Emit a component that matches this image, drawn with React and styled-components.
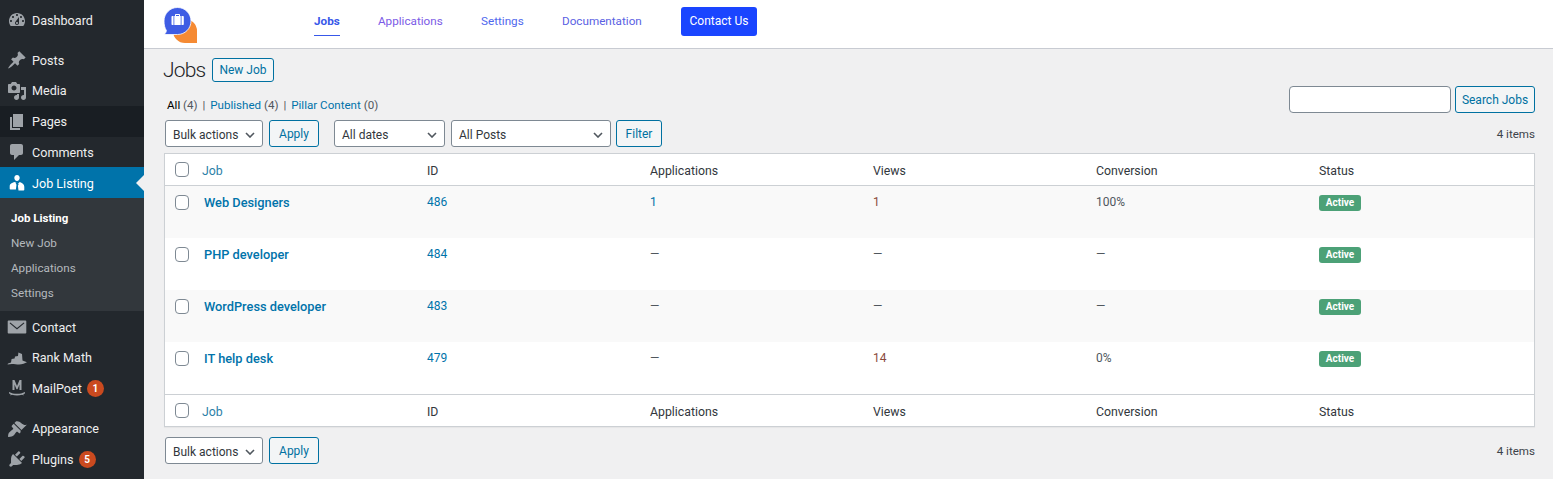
import styled, { createGlobalStyle } from "styled-components";

const FONT = `Roboto, "Noto Sans", "Liberation Sans", sans-serif`;

const GlobalStyle = createGlobalStyle`
  html, body {
    margin: 0;
    height: 100%;
    overflow: hidden;
    background: #f0f0f1;
  }
  body {
    font-family: ${FONT};
    font-size: 12px;
    color: #3c434a;
  }
  * {
    box-sizing: border-box;
  }
`;

const ICONS = {
  dashboard:
    "M3.76 16h12.48c1.1-1.37 1.76-3.11 1.76-5 0-4.42-3.58-8-8-8s-8 3.58-8 8c0 1.89.66 3.63 1.76 5zM10 4c.55 0 1 .45 1 1s-.45 1-1 1-1-.45-1-1 .45-1 1-1zM6 6c.55 0 1 .45 1 1s-.45 1-1 1-1-.45-1-1 .45-1 1-1zm8 0c.55 0 1 .45 1 1s-.45 1-1 1-1-.45-1-1 .45-1 1-1zm-5.37 5.55L12 7v6c0 1.1-.9 2-2 2s-2-.9-2-2c0-.57.24-1.08.63-1.45zM4 10c.55 0 1 .45 1 1s-.45 1-1 1-1-.45-1-1 .45-1 1-1zm12 0c.55 0 1 .45 1 1s-.45 1-1 1-1-.45-1-1 .45-1 1-1zm-5 3c0-.55-.45-1-1-1s-1 .45-1 1 .45 1 1 1 1-.45 1-1z",
  posts:
    "M10.44 3.02l1.82-1.82 6.36 6.35-1.83 1.82c-1.05-.68-2.48-.57-3.41.36l-.75.75c-.92.93-1.04 2.35-.35 3.41l-1.83 1.82-2.41-2.41-2.8 2.79c-.42.42-3.38 2.71-3.8 2.29s1.86-3.39 2.28-3.81l2.79-2.79L4.1 9.36l1.83-1.82c1.05.69 2.48.57 3.41-.36l.75-.75c.93-.92 1.04-2.35.35-3.41z",
  media:
    "M13 11V4c0-.55-.45-1-1-1h-1.67L9 1H5L3.67 3H2c-.55 0-1 .45-1 1v7c0 .55.45 1 1 1h10c.55 0 1-.45 1-1zM7 4.5c1.38 0 2.5 1.12 2.5 2.5S8.38 9.5 7 9.5 4.5 8.38 4.5 7 5.62 4.5 7 4.5zM14 6h5v10.5c0 1.38-1.12 2.5-2.5 2.5S14 17.88 14 16.5s1.12-2.5 2.5-2.5c.17 0 .34.02.5.05V9h-3V6zm-4 8.05V13h2v3.5c0 1.38-1.12 2.5-2.5 2.5S7 17.88 7 16.5 8.12 14 9.5 14c.17 0 .34.02.5.05z",
  pages: "M6 15V2h10v13H6zm-1 1h8v2H3V5h2v11z",
  comments:
    "M5 2h9c1.1 0 2 .9 2 2v7c0 1.1-.9 2-2 2h-2l-5 5v-5H5c-1.1 0-2-.9-2-2V4c0-1.1.9-2 2-2z",
  job: "M10 2c1.500 0 2.700 1.200 2.700 2.800S11.500 8 10 8 7.300 6.400 7.300 4.800 8.500 2 10 2zM7.300 9l2 .7-.6 1.100.8.700-.6 5H3.500c-.5 0-.8-.3-.8-.8v-2.900C2.700 11.100 5 9.800 7.300 9zm5.400 0c2.300.8 4.600 2.100 4.600 4.800v2.900c0 .5-.3.8-.8.8h-5l-.6-5 .8-.7-.6-1.100z",
  contact:
    "M1.500 3.500h17c.4 0 .8.3.8.8v11.400c0 .5-.4.8-.8.8h-17c-.4 0-.8-.3-.8-.8V4.300c0-.5.4-.8.8-.8zM3.300 5.500L2.600 6.300 10 12.500l7.400-6.200-.7-.8L10 11z",
  rankmath:
    "M1 15.500l3-1 .6-3.500 3-.5.4-2 3-.6.4-3.400 3.600 1.500.5 6.500 4.500 1.800-3.500 1.500c-2.800 1-5.400.8-8 .4-2.600-.4-5.200-.5-8 .3z",
  appearance:
    "M14.48 11.06L7.41 3.99l1.5-1.5c.5-.56 2.3-.47 3.51.32 1.21.8 1.43 1.28 2.91 2.1 1.18.64 2.45 1.26 4.45.85zm-.71.71L6.7 4.7 4.93 6.47c-.39.39-.39 1.02 0 1.41l1.06 1.06c.39.39.39 1.03 0 1.42-.6.6-1.43 1.11-2.21 1.69-.35.26-.7.53-1.01.84C1.43 13.71.96 15.88 1.13 17.9c2.4.1 4.400-.4 5.700-1.700.31-.31.58-.66.84-1.01.58-.78 1.09-1.61 1.69-2.21.39-.39 1.03-.39 1.42 0l1.06 1.06c.39.39 1.02.39 1.41 0z",
  plugins:
    "M13.11 4.36L9.87 7.6 8 5.73l3.24-3.24c.35-.34 1.05-.2 1.56.32.52.51.66 1.21.31 1.55zm-8 1.77l.91-1.12 9.01 9.01-1.19.84c-.71.71-2.63 1.16-3.82 1.16H6.14L4.9 17.26c-.59.59-1.54.59-2.12 0-.59-.58-.59-1.53 0-2.12l1.24-1.24v-3.88c0-1.13.4-3.19 1.09-3.89zm7.26 3.97l3.24-3.24c.34-.35 1.04-.21 1.55.31.52.51.66 1.21.31 1.55l-3.24 3.25z",
};

function MenuIcon({ name, active }) {
  return (
    <IconSvg viewBox="0 0 20 20" $active={active}>
      <path d={ICONS[name]} fillRule="evenodd" />
    </IconSvg>
  );
}

function MailPoetIcon() {
  return (
    <IconSvg viewBox="0 0 20 20">
      <path d="M5.500 2h2l2.500 6 2.500-6h2v10h-2V6.500l-2 4.800h-1l-2-4.800V12h-2z" />
      <path d="M2 14c2.600 1.300 5.200 1.800 8 1.800s5.400-.5 8-1.800v1.400l-1.500.7v1.500l-1.300-.8c-3.400 1-7 1-10.400 0l-1.300.8v-1.500L2 15.400z" />
    </IconSvg>
  );
}

function Logo() {
  return (
    <LogoSvg viewBox="0 0 34 38">
      <path d="M22 12a12 12 0 0 1 12 12c0 5 0 8 .5 12H22a12 12 0 0 1 0-24z" fill="#f58a33" />
      <path
        d="M14.500 .5C22 .5 28 6.500 28 14s-6 13.500-13.500 13.500H1c1.300-.8 2.200-2.300 2.400-4C1.800 21.300 1 17.700 1 14 1 6.500 7 .5 14.500 .5z"
        fill="#3e5ce4"
        stroke="#fff"
        strokeWidth="0.8"
      />
      <path
        d="M12 9V7.800c0-.5.4-.8.8-.8h3.400c.4 0 .8.3.8.8V9h3c.5 0 .8.4.8.8v7.400c0 .5-.3.8-.8.8H9.300c-.5 0-.8-.3-.8-.8V9.800c0-.4.3-.8.8-.8zm1 0h3V8h-3zM10.500 9v9h.8V9zm7.200 0v9h.8V9z"
        fill="#fff"
        fillRule="evenodd"
      />
    </LogoSvg>
  );
}

const MENU_TOP = [
  { label: "Dashboard", icon: "dashboard", gap: 10, height: 30 },
  { label: "Posts", icon: "posts", height: 30 },
  { label: "Media", icon: "media", height: 31 },
  { label: "Pages", icon: "pages", height: 31, dark: true },
  { label: "Comments", icon: "comments", height: 30 },
];

const SUBMENU = ["Job Listing", "New Job", "Applications", "Settings"];

const JOBS = [
  { title: "Web Designers", id: 486, apps: "1", views: "1", conv: "100%" },
  { title: "PHP developer", id: 484, apps: "—", views: "—", conv: "—" },
  { title: "WordPress developer", id: 483, apps: "—", views: "—", conv: "—" },
  { title: "IT help desk", id: 479, apps: "—", views: "14", conv: "0%" },
];

const COLUMNS = ["Job", "ID", "Applications", "Views", "Conversion", "Status"];

function HeadRow({ footer }) {
  return (
    <HeadGrid $footer={footer}>
      <CheckCell>
        <Check />
      </CheckCell>
      {COLUMNS.map((col, i) => (
        <HeadCell key={col} $link={i === 0}>
          {col}
        </HeadCell>
      ))}
    </HeadGrid>
  );
}

function BulkActions() {
  return (
    <>
      <Select $width={98}>
        Bulk actions
        <Chevron />
      </Select>
      <Button $width={50}>Apply</Button>
    </>
  );
}

function Chevron() {
  return (
    <ChevronSvg viewBox="0 0 10 6">
      <path d="M1 1l4 4 4-4" />
    </ChevronSvg>
  );
}

export default function App() {
  return (
    <Page>
      <GlobalStyle />
      <Sidebar>
        {MENU_TOP.map((item) => (
          <MenuItem key={item.label} $dark={item.dark} $gap={item.gap} $height={item.height}>
            <MenuIcon name={item.icon} />
            {item.label}
          </MenuItem>
        ))}
        <ActiveItem $height={31}>
          <MenuIcon name="job" active />
          Job Listing
        </ActiveItem>
        <SubMenu>
          {SUBMENU.map((label, i) => (
            <SubItem key={label} $current={i === 0}>
              {label}
            </SubItem>
          ))}
        </SubMenu>
        <MenuItem $top={1}>
          <MenuIcon name="contact" />
          Contact
        </MenuItem>
        <MenuItem>
          <MenuIcon name="rankmath" />
          Rank Math
        </MenuItem>
        <MenuItem $gap={10}>
          <MailPoetIcon />
          MailPoet
          <Badge>1</Badge>
        </MenuItem>
        <MenuItem>
          <MenuIcon name="appearance" />
          Appearance
        </MenuItem>
        <MenuItem>
          <MenuIcon name="plugins" />
          Plugins
          <Badge>5</Badge>
        </MenuItem>
      </Sidebar>

      <Main>
        <TopBar>
          <Logo />
          <TopNav>
            <TopLink $color="#3858e9" $active>
              Jobs
            </TopLink>
            <TopLink $color="#7b5be6">Applications</TopLink>
            <TopLink $color="#4f68ee">Settings</TopLink>
            <TopLink $color="#5a5fe3">Documentation</TopLink>
            <ContactButton>Contact Us</ContactButton>
          </TopNav>
        </TopBar>

        <Content>
          <TitleRow>
            <Title>Jobs</Title>
            <Button $width={62} $height={24}>
              New Job
            </Button>
          </TitleRow>

          <ViewsRow>
            <Views>
              <strong>All</strong> <Count>(4)</Count> <Sep>|</Sep> <a>Published</a>{" "}
              <Count>(4)</Count> <Sep>|</Sep> <a>Pillar Content</a> <Count>(0)</Count>
            </Views>
            <SearchBox>
              <SearchInput />
              <Button $width={80}>Search Jobs</Button>
            </SearchBox>
          </ViewsRow>

          <Toolbar>
            <BulkActions />
            <Select $width={111} $left={9}>
              All dates
              <Chevron />
            </Select>
            <Select $width={160}>
              All Posts
              <Chevron />
            </Select>
            <Button $width={46} $left={-1}>
              Filter
            </Button>
            <ItemCount>4 items</ItemCount>
          </Toolbar>

          <Table>
            <HeadRow />
            {JOBS.map((job, i) => (
              <Row key={job.id} $odd={i % 2 === 0}>
                <CheckCell $row>
                  <Check />
                </CheckCell>
                <JobTitle>{job.title}</JobTitle>
                <Cell $link>{job.id}</Cell>
                <Cell $link={job.apps === "1"}>{job.apps}</Cell>
                <Cell $tone={job.views !== "—"}>{job.views}</Cell>
                <Cell>{job.conv}</Cell>
                <Cell>
                  <StatusPill>Active</StatusPill>
                </Cell>
              </Row>
            ))}
            <HeadRow footer />
          </Table>

          <BottomBar>
            <BulkActions />
            <ItemCount>4 items</ItemCount>
          </BottomBar>
        </Content>
      </Main>
    </Page>
  );
}

const Page = styled.div`
  display: flex;
  height: 479px;
  overflow: hidden;
`;

const Sidebar = styled.nav`
  flex: 0 0 144px;
  width: 144px;
  height: 479px;
  padding-top: 5px;
  background: #23282d;
  display: flex;
  flex-direction: column;
`;

const IconSvg = styled.svg`
  flex: 0 0 20px;
  width: 20px;
  height: 20px;
  margin: 0 5px 0 7px;
  fill: ${(p) => (p.$active ? "#fff" : "#9ea3a8")};
`;

const MenuItem = styled.div`
  flex: 0 0 ${(p) => p.$height || 30.5}px;
  height: ${(p) => p.$height || 30.5}px;
  display: flex;
  align-items: center;
  font-size: 12.6px;
  color: #eee;
  background: ${(p) => (p.$dark ? "#191e23" : "transparent")};
  margin-bottom: ${(p) => p.$gap || 0}px;
  margin-top: ${(p) => p.$top || 0}px;
`;

const ActiveItem = styled(MenuItem)`
  position: relative;
  padding-top: 1px;
  background: #0073aa;
  color: #fff;

  &::after {
    content: "";
    position: absolute;
    right: 0;
    top: 50%;
    margin-top: -8px;
    border: 8px solid transparent;
    border-right-color: #f0f0f1;
    border-left-width: 0;
  }
`;

const SubMenu = styled.div`
  flex: 0 0 113px;
  padding: 8px 0 5px 11px;
  background: #32373c;
  display: flex;
  flex-direction: column;
`;

const SubItem = styled.div`
  height: 25px;
  line-height: 25px;
  font-size: ${(p) => (p.$current ? "11.5px" : "11.7px")};
  font-weight: ${(p) => (p.$current ? 700 : 400)};
  color: ${(p) => (p.$current ? "#fff" : "#b4b9be")};
`;

const Badge = styled.span`
  width: 17px;
  height: 17px;
  margin-left: 5px;
  border-radius: 50%;
  background: #ca4a1f;
  color: #fff;
  font-size: 10px;
  font-weight: 700;
  line-height: 17px;
  text-align: center;
`;

const Main = styled.div`
  flex: 1;
  min-width: 0;
`;

const TopBar = styled.header`
  height: 49px;
  display: flex;
  align-items: flex-start;
  padding: 7px 0 0 19px;
  background: #fff;
  border-bottom: 1px solid #c8cbd2;
`;

const LogoSvg = styled.svg`
  flex: 0 0 34px;
  width: 34px;
  height: 38px;
`;

const TopNav = styled.div`
  margin-left: 117px;
  display: grid;
  grid-template-columns: 64px 103px 81px 119px 76px;
  justify-items: start;
`;

const TopLink = styled.a`
  height: 29px;
  font-size: 11.7px;
  line-height: 29px;
  color: ${(p) => p.$color};
  font-weight: ${(p) => (p.$active ? 700 : 400)};
  border-bottom: ${(p) => (p.$active ? "1px solid #3858e9" : "none")};
`;

const ContactButton = styled.a`
  height: 29px;
  width: 76px;
  border-radius: 3px;
  background: #1a45ff;
  color: #fff;
  font-size: 12px;
  line-height: 29px;
  text-align: center;
`;

const Content = styled.main`
  padding: 9px 18px 0 19px;
`;

const TitleRow = styled.div`
  height: 24px;
  display: flex;
  align-items: center;
`;

const Title = styled.h1`
  flex: 0 0 49px;
  margin: 0;
  font-size: 21px;
  font-weight: 300;
  letter-spacing: -0.8px;
  color: #1d2327;
`;

const Button = styled.button`
  width: ${(p) => p.$width}px;
  height: ${(p) => p.$height || 27}px;
  margin-left: ${(p) => p.$left || 0}px;
  padding: 0;
  border: 1px solid #0071a1;
  border-radius: 3px;
  background: #f3f5f6;
  color: #0071a1;
  font-family: ${FONT};
  font-size: 12px;
  flex: 0 0 auto;
`;

const ViewsRow = styled.div`
  height: 38px;
  margin-left: 4px;
  display: flex;
  justify-content: space-between;
  align-items: flex-start;
`;

const Views = styled.div`
  margin-top: 14px;
  font-size: 11.6px;
  line-height: 18px;

  strong {
    font-weight: 400;
    color: #000;
  }

  a {
    color: #0073aa;
  }
`;

const Count = styled.span`
  color: #50575e;
`;

const Sep = styled.span`
  color: #50575e;
  margin: 0 2px;
`;

const SearchBox = styled.div`
  margin-top: 4px;
  display: flex;
  gap: 4px;
`;

const SearchInput = styled.div`
  width: 162px;
  height: 27px;
  border: 1px solid #7e8993;
  border-radius: 4px;
  background: #fff;
`;

const Toolbar = styled.div`
  height: 27px;
  margin-left: 2px;
  display: flex;
  align-items: center;
  gap: 6px;
`;

const BottomBar = styled(Toolbar)`
  margin-top: 10px;
`;

const Select = styled.div`
  width: ${(p) => p.$width}px;
  height: 27px;
  margin-left: ${(p) => p.$left || 0}px;
  padding: 2px 7px 0 7px;
  display: flex;
  align-items: center;
  justify-content: space-between;
  border: 1px solid #7e8993;
  border-radius: 3px;
  background: #fff;
  color: #32373c;
  font-size: 12px;
  flex: 0 0 auto;
`;

const ChevronSvg = styled.svg`
  width: 10px;
  height: 6px;
  fill: none;
  stroke: #50575e;
  stroke-width: 1.6;
`;

const ItemCount = styled.div`
  margin-left: auto;
  font-size: 11.6px;
  color: #3c434a;
`;

const Table = styled.section`
  margin: 6px 0 0 1px;
  background: #fff;
  border: 1px solid #ccd0d4;
  box-shadow: 0 1px 1px rgba(0, 0, 0, 0.04);
`;

const GRID = "37px 225px repeat(4, 223px) 1fr";

const HeadGrid = styled.div`
  height: 32px;
  display: grid;
  grid-template-columns: ${GRID};
  align-items: center;
  ${(p) => (p.$footer ? "border-top: 1px solid #ccd0d4;" : "border-bottom: 1px solid #ccd0d4;")}
`;

const HeadCell = styled.div`
  padding-top: 2px;
  font-size: 12.3px;
  color: ${(p) => (p.$link ? "#2c7fa8" : "#32373c")};
`;

const CheckCell = styled.div`
  padding-left: 10px;
  padding-top: ${(p) => (p.$row ? "1px" : "0")};
  display: flex;
  align-items: center;
`;

const Check = styled.span`
  width: 14px;
  height: 15px;
  border: 1px solid #7e8993;
  border-radius: 4px;
  background: #fff;
`;

const Row = styled.div`
  height: 52px;
  padding-top: 8px;
  display: grid;
  grid-template-columns: ${GRID};
  align-items: start;
  background: ${(p) => (p.$odd ? "#f9f9f9" : "#fff")};
`;

const JobTitle = styled.a`
  padding-left: 2px;
  font-size: 12.8px;
  font-weight: 500;
  line-height: 17px;
  color: #0073aa;
`;

const Cell = styled.div`
  padding-top: 1px;
  font-size: 12px;
  line-height: 15px;
  color: ${(p) => (p.$link ? "#0073aa" : p.$tone ? "#8a4b3c" : "#50575e")};
`;

const StatusPill = styled.span`
  display: inline-block;
  width: 42px;
  height: 16px;
  border-radius: 3px;
  background: #4ca177;
  color: #fff;
  font-size: 10px;
  font-weight: 700;
  line-height: 16px;
  text-align: center;
`;
